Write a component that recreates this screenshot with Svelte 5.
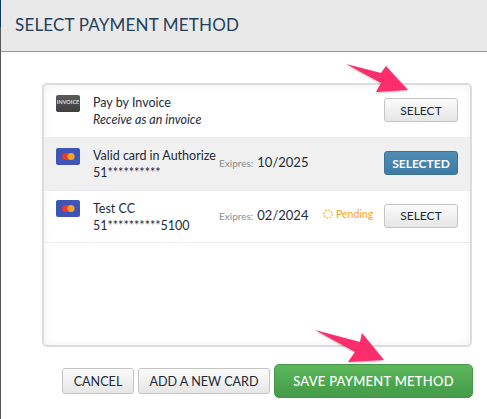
<script>
  const methods = [
    { id: 'invoice', name: 'Pay by Invoice', sub: 'Receive as an invoice', action: 'SELECT' },
    { id: 'auth', name: 'Valid card in Authorize', number: '51**********', expires: '10/2025', action: 'SELECTED', active: true },
    { id: 'test', name: 'Test CC', number: '51**********5100', expires: '02/2024', pending: true, action: 'SELECT' }
  ];
</script>

<div class="modal">
  <header class="head">
    <h1>SELECT PAYMENT METHOD</h1>
  </header>

  <div class="body">
    <div class="panel">
      {#each methods as m (m.id)}
        <div class="row" class:active={m.active}>
          {#if m.id === 'invoice'}
            <div class="icon invoice"><span>INVOICE</span></div>
          {:else}
            <div class="icon card">
              <svg width="15" height="9" viewBox="0 0 15 9" aria-hidden="true">
                <circle cx="4.6" cy="4.5" r="3.6" fill="#ea3a30" />
                <circle cx="10" cy="4.5" r="3.6" fill="#f8a325" />
              </svg>
            </div>
          {/if}
          <div class="info">
            <div>{m.name}</div>
            {#if m.sub}
              <div class="sub">{m.sub}</div>
            {:else}
              <div>{m.number}</div>
            {/if}
          </div>
          {#if m.expires}
            <div class="expires"><small>Exipres:</small><span>{m.expires}</span></div>
          {/if}
          {#if m.pending}
            <div class="pending">
              <svg width="10" height="10" viewBox="0 0 10 10" aria-hidden="true">
                <circle cx="5" cy="5" r="4" fill="none" stroke="#f5a623" stroke-width="1.2" stroke-dasharray="1.6 1.5" />
              </svg>
              Pending
            </div>
          {/if}
          <button class="btn pick" class:selected={m.active}>{m.action}</button>
        </div>
      {/each}
    </div>

    <div class="foot">
      <button class="btn cancel">CANCEL</button>
      <button class="btn add">ADD A NEW CARD</button>
      <button class="btn save">SAVE PAYMENT METHOD</button>
    </div>
  </div>

  <svg class="arrows" width="487" height="419" viewBox="0 0 487 419" aria-hidden="true">
    <polygon points="346,64 381,73 386,66 408,90 376,92 381,83" />
    <polygon points="315,330 360,342 362,333 384,360 348,362 355,352" />
  </svg>
</div>

<style>
  :global(body) {
    margin: 0;
    background: #fff;
  }

  .modal {
    position: relative;
    width: 487px;
    height: 419px;
    overflow: hidden;
    box-sizing: border-box;
    border-left: 1px solid #55585b;
    border-image: linear-gradient(#0d3a5c 28px, #55585b 28px) 1;
    font-family: Lato, sans-serif;
    color: #1d2b3a;
  }

  .head {
    height: 52px;
    box-sizing: border-box;
    background: #e9e9e9;
    border-bottom: 1px solid #6fa6c8;
    padding: 15px 0 0 14px;
  }

  h1 {
    margin: 0;
    font-size: 17px;
    line-height: 20px;
    font-weight: 400;
    letter-spacing: 0.17px;
    color: #24405c;
  }

  .body {
    padding: 31px 15px 0 41px;
  }

  .panel {
    height: 264px;
    box-sizing: border-box;
    border: 2px solid #dcdcdc;
    border-radius: 5px;
    box-shadow: inset 0 0 10px rgba(0, 0, 0, 0.06);
  }

  .row {
    display: flex;
    align-items: center;
    height: 53px;
    box-sizing: border-box;
    padding: 0 12px;
    border-bottom: 1px solid #ececec;
    font-size: 12.5px;
    line-height: 17px;
  }

  .row:last-child {
    height: 52px;
  }

  .row.active {
    background: #f0f0f0;
  }

  .icon {
    width: 24px;
    height: 17px;
    border-radius: 2px;
    margin: -16px 13px 0 0;
    flex: none;
    display: flex;
    align-items: center;
    justify-content: center;
  }

  .invoice {
    background: linear-gradient(#5a5a5a, #3e3e3e);
    color: #ddd;
  }

  .invoice span {
    font-size: 5.5px;
    font-weight: 700;
    line-height: 1;
  }

  .card {
    background: #3f55b5;
  }

  .info {
    width: 126px;
    flex: none;
    white-space: nowrap;
  }

  .sub {
    font-style: italic;
  }

  .expires {
    display: flex;
    align-items: baseline;
    gap: 4px;
    width: 86px;
    flex: none;
    white-space: nowrap;
    font-size: 13px;
    margin-bottom: 2px;
  }

  .expires small {
    font-size: 10px;
    color: #8a8d90;
  }

  .pending {
    display: flex;
    align-items: center;
    gap: 3px;
    margin: 0 0 5px 18px;
    font-size: 10.5px;
    white-space: nowrap;
    color: #f5a623;
  }

  .btn {
    height: 26px;
    padding: 0;
    box-sizing: border-box;
    border: 1px solid #c4c4c4;
    border-radius: 3px;
    background: linear-gradient(#fbfbfb, #e6e6e6);
    font-family: inherit;
    font-size: 12px;
    color: #1d2b3a;
  }

  .pick {
    width: 74px;
    height: 24px;
    margin: 0 0 2px auto;
    flex: none;
  }

  .pick.selected {
    background: linear-gradient(#4f8db5, #3f7aa1);
    border-color: #3b7298;
    color: #fff;
    font-weight: 700;
  }

  .foot {
    display: flex;
    justify-content: flex-end;
    align-items: center;
    margin: 17px -1px 0 0;
    gap: 4px;
  }

  .foot .btn {
    font-size: 12.6px;
  }

  .foot .cancel {
    width: 72px;
  }

  .foot .add {
    width: 132px;
  }

  .foot .save {
    width: 199px;
    height: 34px;
    border: 1px solid #479447;
    border-radius: 5px;
    background: linear-gradient(#5cb85c, #449a48);
    color: #fff;
    font-size: 13px;
    letter-spacing: 0.25px;
    font-weight: 500;
  }

  .arrows {
    position: absolute;
    left: -1px;
    top: 0;
    pointer-events: none;
  }

  .arrows polygon {
    fill: #fb2d6c;
    filter: drop-shadow(0 1px 1px rgba(0, 0, 0, 0.25));
  }
</style>
